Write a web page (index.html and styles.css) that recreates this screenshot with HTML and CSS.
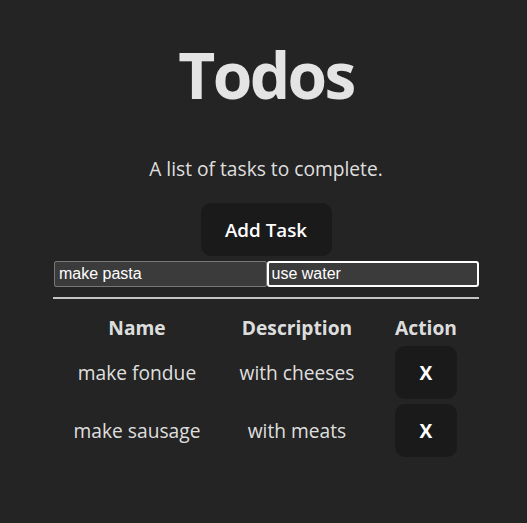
FILE: index.html
```html
<!DOCTYPE html>
<html lang="en">
<head>
<meta charset="utf-8">
<title>Todos</title>
<link rel="stylesheet" href="styles.css">
</head>
<body>
<main class="app">
  <h1 class="title">Todos</h1>
  <p class="subtitle">A list of tasks to complete.</p>
  <button class="btn add-btn" type="button">Add Task</button>
  <div class="inputs">
    <input class="field" type="text" value="make pasta">
    <input class="field focused" type="text" value="use water">
  </div>
  <hr class="divider">
  <table class="tasks">
    <colgroup>
      <col class="c-name">
      <col class="c-desc">
      <col class="c-act">
    </colgroup>
    <thead>
      <tr><th>Name</th><th>Description</th><th>Action</th></tr>
    </thead>
    <tbody>
      <tr><td>make fondue</td><td>with cheeses</td><td><button class="btn del-btn" type="button">X</button></td></tr>
      <tr><td>make sausage</td><td>with meats</td><td><button class="btn del-btn" type="button">X</button></td></tr>
    </tbody>
  </table>
</main>
</body>
</html>
```

FILE: styles.css
```css
html, body {
  margin: 0;
  padding: 0;
  background: #242424;
}

body {
  font-family: "Open Sans", "Noto Sans", sans-serif;
  color: rgba(255, 255, 255, 0.87);
  min-height: 523px;
}

.app {
  width: 426px;
  margin-left: 53px;
  display: flex;
  flex-direction: column;
  align-items: center;
  padding-top: 40px;
}

.title {
  margin: 0;
  font-size: 64px;
  line-height: 70px;
  font-weight: 700;
  letter-spacing: -2.6px;
  color: #e4e4e4;
}

.subtitle {
  margin: 45px 0 0;
  font-size: 19.2px;
  line-height: 28px;
}

.btn {
  font-family: "Open Sans", "Noto Sans", sans-serif;
  background: #1a1a1a;
  color: #fff;
  border: 1px solid transparent;
  border-radius: 10px;
  font-weight: 600;
  cursor: pointer;
}

.add-btn {
  margin-top: 20px;
  width: 131px;
  height: 53px;
  font-size: 18.8px;
  padding: 0;
}

.inputs {
  margin-top: 5px;
  align-self: stretch;
  display: flex;
  padding-left: 1px;
}

.field {
  flex: 1;
  min-width: 0;
  height: 26px;
  box-sizing: border-box;
  background: #3b3b3b;
  color: #fff;
  border: 1px solid #777;
  border-radius: 2px;
  padding: 0 4px;
  font-family: "Liberation Sans", Arial, sans-serif;
  font-size: 16px;
  outline: none;
}

.field.focused {
  border: 2px solid #fff;
  border-radius: 3px;
  padding: 0 3px;
}

.divider {
  align-self: stretch;
  margin: 10px 0 0;
  border: 0;
  height: 2px;
  background: #c4c4c4;
}

.tasks {
  width: 426px;
  table-layout: fixed;
  border-collapse: collapse;
  margin-top: 15px;
  font-size: 19.2px;
  line-height: 28px;
}

.c-name { width: 168px; }
.c-desc { width: 152px; }
.c-act { width: 106px; }

.tasks th {
  font-weight: 700;
  padding: 0 0 2px;
  text-align: center;
}

.tasks td {
  padding: 2px 0 3px;
  text-align: center;
  vertical-align: middle;
}

.del-btn {
  width: 62px;
  height: 53px;
  padding: 0;
  font-size: 19.2px;
  font-weight: 700;
  vertical-align: middle;
}
```
